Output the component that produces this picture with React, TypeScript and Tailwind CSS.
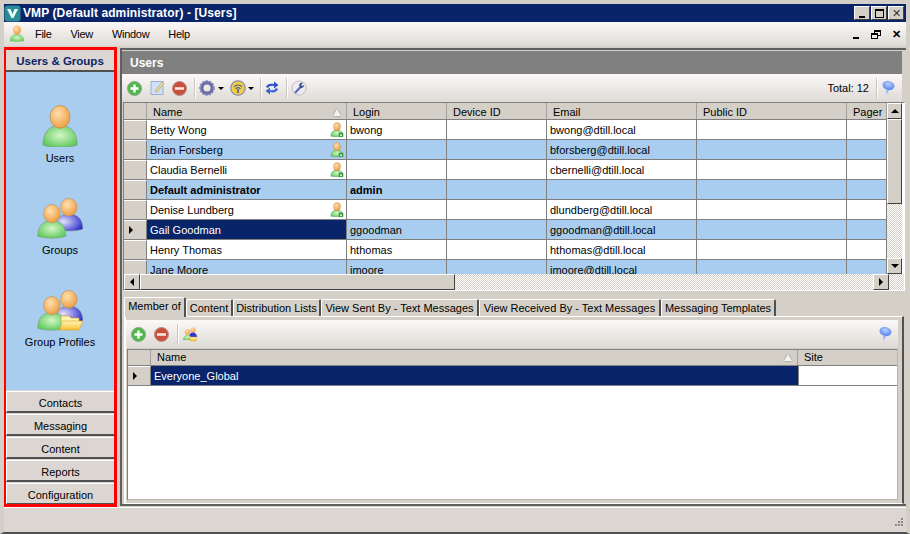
import type { ReactNode } from "react";

const font = "font-['Liberation_Sans',Arial,sans-serif]";
const bevel = "border border-t-white border-l-white border-r-[#404040] border-b-[#404040]";
const dither = "bg-[repeating-conic-gradient(#d4d0c8_0_25%,#ffffff_0_50%)] bg-[length:2px_2px]";

function Defs() {
  return (
    <svg width="0" height="0" className="absolute">
      <defs>
        <radialGradient id="skin" cx="0.4" cy="0.35" r="0.7">
          <stop offset="0" stopColor="#ffe0b0" />
          <stop offset="1" stopColor="#ee9a3c" />
        </radialGradient>
        <radialGradient id="green" cx="0.5" cy="0.45" r="0.7">
          <stop offset="0" stopColor="#d4f7c8" />
          <stop offset="1" stopColor="#48c048" />
        </radialGradient>
        <radialGradient id="blue" cx="0.3" cy="0.45" r="0.8">
          <stop offset="0" stopColor="#e4e4fa" />
          <stop offset="1" stopColor="#2020c8" />
        </radialGradient>
        <linearGradient id="folder" x1="0" y1="0" x2="0" y2="1">
          <stop offset="0" stopColor="#fff6b8" />
          <stop offset="1" stopColor="#f8c030" />
        </linearGradient>
        <radialGradient id="ball" cx="0.45" cy="0.35" r="0.7">
          <stop offset="0" stopColor="#bcd0ff" />
          <stop offset="1" stopColor="#4a7cf0" />
        </radialGradient>
      </defs>
    </svg>
  );
}

function Person({ x = 0, y = 0, sx = 1, sy = 1, fill = "green" }: { x?: number; y?: number; sx?: number; sy?: number; fill?: string }) {
  return (
    <g transform={`translate(${x} ${y}) scale(${sx} ${sy})`}>
      <path d="M1 37C1 24 9 19 19 19s18 5 18 18c-8 3-28 3-36 0z" fill={`url(#${fill})`} stroke="#7f9a7f" strokeWidth="0.7" />
      <ellipse cx="19" cy="11" rx="10.5" ry="10.5" fill="url(#skin)" stroke="#b98a50" strokeWidth="0.7" />
    </g>
  );
}

function UserIcon() {
  return (
    <svg width="36" height="42" viewBox="0 0 36 42">
      <Person sx={0.95} sy={1.08} />
    </svg>
  );
}

function GroupIcon({ profile = false }: { profile?: boolean }) {
  return (
    <svg width="46" height="41" viewBox="0 0 46 41">
      <Person x={17} y={0} sx={0.78} sy={0.84} fill="blue" />
      <Person x={0} y={6} sx={0.78} sy={0.87} />
      {profile && (
        <g>
          <path d="M24 26h8l2 2h8v4H24z" fill="#fff4b0" stroke="#d8a030" strokeWidth="0.7" />
          <path d="M25 31h21l-4 9H23z" fill="url(#folder)" stroke="#e0a830" strokeWidth="0.7" />
        </g>
      )}
    </svg>
  );
}

function SmallUser() {
  return (
    <svg width="14" height="16" viewBox="0 0 16 18">
      <path d="M1 16C1 11 4 9 8 9s7 2 7 7c-3 1-11 1-14 0z" fill="url(#green)" stroke="#7f9a7f" strokeWidth="0.5" />
      <ellipse cx="8" cy="5" rx="4" ry="4.6" fill="url(#skin)" stroke="#b98a50" strokeWidth="0.4" />
      <rect x="10" y="12" width="5" height="5" rx="1" fill="#2e9a3c" />
      <rect x="11.5" y="14" width="2" height="2" fill="#e8ffe8" />
    </svg>
  );
}

function AddIcon() {
  return (
    <svg width="15" height="15" viewBox="0 0 15 15">
      <circle cx="7.5" cy="7.5" r="7" fill="#4fb848" stroke="#8aa88a" />
      <path d="M3.5 7.5h8M7.5 3.5v8" stroke="#fff" strokeWidth="2.4" />
    </svg>
  );
}

function RemoveIcon() {
  return (
    <svg width="15" height="15" viewBox="0 0 15 15">
      <circle cx="7.5" cy="7.5" r="7" fill="#c8503c" stroke="#b09088" />
      <path d="M3 7.5h9" stroke="#f8e8e0" strokeWidth="2.6" />
    </svg>
  );
}

function EditIcon() {
  return (
    <svg width="15" height="16" viewBox="0 0 15 16">
      <rect x="1" y="1.5" width="12" height="13" fill="#cfe0f8" stroke="#9ab0d0" />
      <path d="M5 11l7-9 2 1.5-7 9z" fill="#e8d890" stroke="#8a9a70" strokeWidth="0.5" />
    </svg>
  );
}

function GearIcon() {
  return (
    <svg width="16" height="16" viewBox="0 0 16 16">
      <circle cx="8" cy="8" r="5.2" fill="none" stroke="#6a70a8" strokeWidth="3.4" />
      <circle cx="8" cy="8" r="7.2" fill="none" stroke="#8a90b8" strokeWidth="1.4" strokeDasharray="2 1.6" />
    </svg>
  );
}

function WirelessIcon() {
  return (
    <svg width="16" height="16" viewBox="0 0 16 16">
      <circle cx="8" cy="8" r="7.2" fill="#f0d040" stroke="#8a88b0" strokeWidth="1.2" />
      <path d="M4 7a5 5 0 0 1 8 0M5.5 9a3 3 0 0 1 5 0" fill="none" stroke="#5058a0" strokeWidth="1.1" />
      <path d="M8 9v4" stroke="#5058a0" strokeWidth="1.6" />
    </svg>
  );
}

function RefreshIcon() {
  return (
    <svg width="14" height="16" viewBox="0 0 14 16">
      <path d="M1 7c1-3 4-4 8-3V1.500L13.500 5 9 8.500V6C6 5.500 4 6 3 8z" fill="#2c50c8" />
      <path d="M13 9c-1 3-4 4-8 3v2.500L.5 11 5 7.500V10c3 .5 5 0 6-2z" fill="#3a68d8" />
    </svg>
  );
}

function WrenchIcon() {
  return (
    <svg width="16" height="16" viewBox="0 0 16 16">
      <circle cx="8" cy="8" r="7" fill="#eeeaf4" stroke="#c0bcc8" />
      <path d="M4 13l5-5.500" stroke="#5a70a8" strokeWidth="2.200" />
      <path d="M8 5a3 3 0 0 1 4-2l-2 2 1 1 2-1a3 3 0 0 1-4 3z" fill="#38508c" />
    </svg>
  );
}

function PinIcon() {
  return (
    <svg width="14" height="16" viewBox="0 0 14 16">
      <ellipse cx="7.500" cy="5.500" rx="6" ry="4.500" transform="rotate(15 7.500 5.500)" fill="url(#ball)" />
      <path d="M5 9l.5 6L8 10z" fill="#9ab4f4" />
    </svg>
  );
}

function ProfileSmall() {
  return (
    <svg width="16" height="16" viewBox="0 0 16 16">
      <circle cx="11" cy="4" r="2.600" fill="url(#skin)" />
      <path d="M7 11c0-3 2-4.500 4-4.500s4 1.500 4 4.500z" fill="#3038c8" />
      <circle cx="5.500" cy="6" r="2.800" fill="url(#skin)" />
      <path d="M1 14c0-3 2-5 4.500-5S10 11 10 14z" fill="url(#green)" />
      <path d="M8 11h7l-1 4H8z" fill="url(#folder)" stroke="#d8a030" strokeWidth="0.4" />
    </svg>
  );
}

function Caret() {
  return <span className="h-0 w-0 border-x-[3px] border-t-[3px] border-x-transparent border-t-black" />;
}

function Sep() {
  return <span className="ml-[7px] mr-[4px] h-[20px] w-px bg-[#c8c4c0] shadow-[1px_0_0_#ffffff]" />;
}

function Tri({ dir }: { dir: "up" | "down" | "left" | "right" }) {
  if (dir === "up") return <span className="h-0 w-0 border-x-[4px] border-b-[4px] border-x-transparent border-b-black" />;
  if (dir === "down") return <span className="h-0 w-0 border-x-[4px] border-t-[4px] border-x-transparent border-t-black" />;
  if (dir === "left") return <span className="h-0 w-0 border-y-[4px] border-r-[4px] border-y-transparent border-r-black" />;
  return <span className="h-0 w-0 border-y-[4px] border-l-[4px] border-y-transparent border-l-black" />;
}

function ScrollBtn({ dir }: { dir: "up" | "down" | "left" | "right" }) {
  const size = dir === "up" || dir === "down" ? "w-full" : "w-[16px]";
  return (
    <div className={`flex h-[16px] shrink-0 items-center justify-center bg-[#d4d0c8] ${size} ${bevel}`}>
      <Tri dir={dir} />
    </div>
  );
}

function SortMark() {
  return <span className="h-0 w-0 border-x-[4px] border-b-[7px] border-x-transparent border-b-[#f4f2ee] drop-shadow-[0_0_1px_#808080]" />;
}

function HeaderCell({ w, children, sort, pt = "pt-[2px]" }: { w: string; children: ReactNode; sort?: boolean; pt?: string }) {
  return (
    <div className={`flex shrink-0 items-center justify-between overflow-hidden whitespace-nowrap border-r border-[#a0a0a0] pl-[6px] ${pt} ${sort ? "pr-[5px]" : ""} ${w}`}>
      <span className="shrink-0">{children}</span>
      {sort && <SortMark />}
    </div>
  );
}

const rows = [
  { name: "Betty Wong", login: "bwong", email: "bwong@dtill.local", icon: true },
  { name: "Brian Forsberg", login: "", email: "bforsberg@dtill.local", icon: true },
  { name: "Claudia Bernelli", login: "", email: "cbernelli@dtill.local", icon: true },
  { name: "Default administrator", login: "admin", email: "", bold: true },
  { name: "Denise Lundberg", login: "", email: "dlundberg@dtill.local", icon: true },
  { name: "Gail Goodman", login: "ggoodman", email: "ggoodman@dtill.local", selected: true },
  { name: "Henry Thomas", login: "hthomas", email: "hthomas@dtill.local" },
  { name: "Jane Moore", login: "jmoore", email: "jmoore@dtill.local" },
];

function UserRow({ row, index }: { row: (typeof rows)[number]; index: number }) {
  const bg = index % 2 === 1 ? "bg-[#a9cdef]" : "bg-white";
  const cell = "flex shrink-0 items-center overflow-hidden whitespace-nowrap border-r border-[#808080] pl-[3px]";
  return (
    <div className={`flex h-[20px] shrink-0 border-b border-[#808080] ${row.bold ? "font-bold" : ""}`}>
      <div className="flex w-[23px] shrink-0 items-center border-r border-t border-[#808080] border-t-white bg-[#d4d0c8] pl-[5px]">
        {row.selected && <Tri dir="right" />}
      </div>
      <div className={`${cell} w-[200px] justify-between pr-[2px] ${row.selected ? "bg-[#0a246a] text-white" : bg}`}>
        <span className="pt-[2px]">{row.name}</span>
        {row.icon && <SmallUser />}
      </div>
      <div className={`${cell} w-[100px] pt-[2px] ${bg}`}>{row.login}</div>
      <div className={`${cell} w-[100px] ${bg}`} />
      <div className={`${cell} w-[150px] pt-[2px] ${bg}`}>{row.email}</div>
      <div className={`${cell} w-[150px] ${bg}`} />
      <div className={`${cell} w-[40px] ${bg}`} />
    </div>
  );
}

function UsersGrid() {
  return (
    <div className="ml-[1px] mr-[1px] flex h-[189px] shrink-0 flex-col border border-[#808080] border-b-white border-r-white bg-white">
      <div className="flex min-h-0 flex-1">
        <div className="flex w-[763px] min-w-0 flex-col overflow-hidden">
          <div className="flex h-[17px] shrink-0 border-b border-[#808080] bg-[#d4d0c8]">
            <div className="w-[23px] shrink-0 border-r border-[#a0a0a0]" />
            <HeaderCell w="w-[200px]" sort>Name</HeaderCell>
            <HeaderCell w="w-[100px]">Login</HeaderCell>
            <HeaderCell w="w-[100px]">Device ID</HeaderCell>
            <HeaderCell w="w-[150px]">Email</HeaderCell>
            <HeaderCell w="w-[150px]">Public ID</HeaderCell>
            <HeaderCell w="w-[40px]">Pager ID</HeaderCell>
          </div>
          {rows.map((row, i) => (
            <UserRow key={row.name} row={row} index={i} />
          ))}
        </div>
        <div className={`flex w-[15px] shrink-0 flex-col ${dither}`}>
          <ScrollBtn dir="up" />
          <div className={`h-[85px] bg-[#d4d0c8] ${bevel}`} />
          <div className="flex-1" />
          <ScrollBtn dir="down" />
        </div>
      </div>
      <div className={`flex h-[16px] shrink-0 pr-[15px] ${dither}`}>
        <ScrollBtn dir="left" />
        <div className={`h-[16px] w-[315px] bg-[#d4d0c8] ${bevel}`} />
        <div className="flex-1" />
        <ScrollBtn dir="right" />
      </div>
    </div>
  );
}

function Tabs() {
  const tabs = [
    { label: "Member of", w: "w-[62px]" },
    { label: "Content", w: "w-[47px]" },
    { label: "Distribution Lists", w: "w-[88px]" },
    { label: "View Sent By - Text Messages", w: "w-[158px]" },
    { label: "View Received By - Text Messages", w: "w-[182px]" },
    { label: "Messaging Templates", w: "w-[115px]" },
  ];
  return (
    <div className="mt-[6px] flex h-[19px] shrink-0 items-end pl-[2px]">
      {tabs.map((tab, i) => (
        <div
          key={tab.label}
          className={`flex shrink-0 items-center justify-center whitespace-nowrap rounded-t-[2px] border-t border-l border-r-2 border-t-white border-l-white border-r-[#505050] bg-[#d4d0c8] ${tab.w} ${i === 0 ? "relative z-10 -mb-[1px] h-[20px] pb-[3px]" : "h-[17px] pt-[1px]"}`}
        >
          {tab.label}
        </div>
      ))}
    </div>
  );
}

function MembersGrid() {
  return (
    <div className="ml-[1px] mt-[1px] flex min-h-0 flex-1 flex-col border border-[#808080] border-b-[#b8b4ac] border-r-[#b8b4ac] bg-white">
      <div className="flex h-[16px] shrink-0 border-b border-[#808080] bg-[#d4d0c8]">
        <div className="w-[23px] shrink-0 border-r border-[#a0a0a0]" />
        <HeaderCell w="w-[647px]" sort pt="pt-0">Name</HeaderCell>
        <div className="flex items-center pl-[6px]">Site</div>
      </div>
      <div className="flex h-[20px] shrink-0 border-b border-[#808080]">
        <div className="flex w-[23px] shrink-0 items-center border-r border-t border-[#808080] border-t-white bg-[#d4d0c8] pl-[5px]">
          <Tri dir="right" />
        </div>
        <div className="flex w-[647px] shrink-0 items-center bg-[#0a246a] pl-[3px] pt-[2px] text-white">Everyone_Global</div>
        <div className="flex-1 border-l border-[#808080]" />
      </div>
    </div>
  );
}

function Toolbar({ children, pr }: { children: ReactNode; pr: string }) {
  return (
    <div className={`flex h-[28px] shrink-0 items-center bg-gradient-to-b from-[#fbf8f8] to-[#dedad5] pl-[5px] ${pr}`}>
      {children}
    </div>
  );
}

function NavButton({ label }: { label: string }) {
  return (
    <div className="mt-[1px] flex h-[22px] shrink-0 items-center justify-center border-t border-l border-b-2 border-t-white border-l-white border-b-[#505050] bg-[#dbd6d1] pt-[4px]">
      {label}
    </div>
  );
}

function NavItem({ label, children, h }: { label: string; children: ReactNode; h: string }) {
  return (
    <div className={`flex flex-col items-center justify-end ${h}`}>
      {children}
      <span className="mt-[5px] leading-[13px]">{label}</span>
    </div>
  );
}

function Sidebar() {
  return (
    <div className="flex h-[460px] w-[114px] shrink-0 flex-col overflow-hidden border-[3px] border-[#ff0000] bg-[#dbd6d1]">
      <div className="flex h-[22px] shrink-0 items-center justify-center border-b-2 border-[#505050] pt-[4px] text-[11.5px] font-bold text-[#0a246a]">
        Users &amp; Groups
      </div>
      <div className="flex h-[318px] shrink-0 flex-col items-center bg-[#a9cdef]">
        <NavItem label="Users" h="h-[93px]"><UserIcon /></NavItem>
        <NavItem label="Groups" h="h-[92px]"><GroupIcon /></NavItem>
        <NavItem label="Group Profiles" h="h-[92px]"><GroupIcon profile /></NavItem>
      </div>
      <div className="flex flex-col">
        {["Contacts", "Messaging", "Content", "Reports", "Configuration"].map((label) => (
          <NavButton key={label} label={label} />
        ))}
      </div>
    </div>
  );
}

export default function App() {
  return (
    <div className={`${font} flex h-[534px] w-[910px] flex-col overflow-hidden border-[4px] border-b-[2px] border-[#d4d0c8] border-b-[#505050] bg-[#d4d0c8] text-[11px] leading-none text-black`}>
      <Defs />
      <div className="flex h-[18px] shrink-0 items-center bg-[#0a246a] pr-[2px] text-[12px] font-bold text-white">
        <svg width="17" height="17" viewBox="0 0 17 17" className="mr-[2px]">
          <rect x="0.500" y="0.500" width="16" height="16" rx="3" fill="#2c8a96" />
          <path d="M3 4h3.500l2 5 2-5H14l-4.500 9h-2z" fill="#e8fafa" />
        </svg>
        <span className="flex-1 tracking-[0.1px]">VMP (Default administrator) - [Users]</span>
        {[
          <span key="m" className="mt-[7px] h-[2px] w-[6px] bg-black" />,
          <span key="x" className="h-[9px] w-[9px] border border-t-2 border-black" />,
          <span key="c" className="text-[11px] font-normal text-[#333333]">✕</span>,
        ].map((glyph, i) => (
          <div key={i} className={`ml-[1px] flex h-[14px] w-[16px] items-center justify-center bg-[#d4d0c8] ${bevel}`}>
            {glyph}
          </div>
        ))}
      </div>

      <div className="flex h-[24px] shrink-0 items-center bg-gradient-to-b from-[#fbf8f8] to-[#dedad5] pl-[5px]">
        <svg width="16" height="18" viewBox="0 0 16 18">
          <path d="M1 16C1 11 4 9 8 9s7 2 7 7c-3 1-11 1-14 0z" fill="url(#green)" />
          <ellipse cx="8" cy="5" rx="4" ry="4.600" fill="url(#skin)" />
        </svg>
        <div className="flex tracking-[-0.3px]">
          <span className="ml-[10px]">File</span>
          <span className="ml-[19px]">View</span>
          <span className="ml-[19px]">Window</span>
          <span className="ml-[19px]">Help</span>
        </div>
        <div className="ml-auto flex items-center pr-[5px]">
          <span className="mt-[7px] h-[2px] w-[6px] bg-black" />
          <span className="relative ml-[12px] h-[9px] w-[10px]">
            <span className="absolute right-0 top-0 h-[6px] w-[7px] border border-t-2 border-black" />
            <span className="absolute bottom-0 left-0 h-[6px] w-[7px] border border-t-2 border-black bg-[#eeeae8]" />
          </span>
          <span className="ml-[11px] text-[11px] font-bold">✕</span>
        </div>
      </div>

      <div className="flex h-[461px] shrink-0 pt-[1px]">
        <div className="-ml-[1px] w-[114px] shrink-0">
          <Sidebar />
        </div>
        <div className="ml-[3px] mt-[1px] flex h-[458px] min-w-0 flex-1 flex-col border-2 border-[#606060] border-r-0 pt-[1px]">
          <div className="mr-[4px] flex shrink-0 flex-col">
            <div className="flex h-[23px] items-center bg-[#808080] pl-[8px] text-[12px] font-bold text-white">Users</div>
            <Toolbar pr="pr-[7px]">
              <AddIcon />
              <span className="ml-[8px]"><EditIcon /></span>
              <span className="ml-[7px]"><RemoveIcon /></span>
              <Sep />
              <GearIcon />
              <span className="ml-[3px] flex"><Caret /></span>
              <span className="ml-[6px] flex items-center"><WirelessIcon /></span>
              <span className="ml-[2px] flex"><Caret /></span>
              <span className="ml-[-1px] flex items-center"><Sep /></span>
              <RefreshIcon />
              <Sep />
              <WrenchIcon />
              <span className="ml-auto">Total: 12</span>
              <Sep />
              <PinIcon />
            </Toolbar>
          </div>
          <UsersGrid />
          <Tabs />
          <div className="ml-[2px] mr-[2px] flex min-h-0 flex-1 flex-col border-l-2 border-r-2 border-t border-b border-white border-r-[#505050] pb-[3px] pr-[4px] pt-[3px]">
            <Toolbar pr="pr-[6px]">
              <AddIcon />
              <span className="ml-[8px]"><RemoveIcon /></span>
              <span className="ml-[1px] flex items-center"><Sep /></span>
              <ProfileSmall />
              <span className="ml-auto"><PinIcon /></span>
            </Toolbar>
            <MembersGrid />
          </div>
        </div>
      </div>

      <div className="relative flex-1 border-t border-white bg-[#dbd6d1]">
        <svg width="12" height="12" viewBox="0 0 12 12" className="absolute bottom-[3px] right-[2px]">
          <path d="M9 1h2v2H9zM6 4h2v2H6zM9 4h2v2H9zM3 7h2v2H3zM6 7h2v2H6zM9 7h2v2H9z" fill="#8a8880" />
        </svg>
      </div>
    </div>
  );
}
